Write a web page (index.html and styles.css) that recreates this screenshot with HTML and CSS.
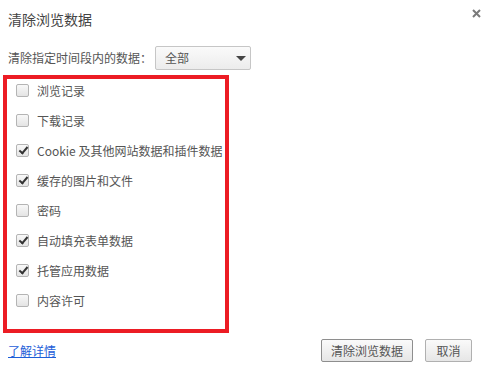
FILE: index.html
```html
<!DOCTYPE html>
<html lang="zh-CN">
<head>
<meta charset="utf-8">
<link rel="stylesheet" href="styles.css">
</head>
<body>
<div class="dialog">
  <div class="header">
    <div class="title">清除浏览数据</div>
    <div class="close"><svg width="9" height="9" viewBox="0 0 9 9"><path d="M1 1L8 8M8 1L1 8" stroke="#7a7a7a" stroke-width="2"/></svg></div>
  </div>
  <div class="range">
    <span class="label">清除指定时间段内的数据：</span>
    <div class="select"><span>全部</span><span class="arrow"></span></div>
  </div>
  <div class="box">
    <label class="item"><span class="cb"></span><span>浏览记录</span></label>
    <label class="item"><span class="cb"></span><span>下载记录</span></label>
    <label class="item"><span class="cb on"></span><span>Cookie 及其他网站数据和插件数据</span></label>
    <label class="item"><span class="cb on"></span><span>缓存的图片和文件</span></label>
    <label class="item"><span class="cb"></span><span>密码</span></label>
    <label class="item"><span class="cb on"></span><span>自动填充表单数据</span></label>
    <label class="item"><span class="cb on"></span><span>托管应用数据</span></label>
    <label class="item"><span class="cb"></span><span>内容许可</span></label>
  </div>
  <div class="footer">
    <a class="link" href="#">了解详情</a>
    <div class="buttons">
      <button class="btn primary">清除浏览数据</button>
      <button class="btn cancel">取消</button>
    </div>
  </div>
</div>
</body>
</html>
```
FILE: styles.css
```css
html, body {
  margin: 0;
  padding: 0;
  background: #fff;
}
body {
  font-family: "Noto Sans CJK SC", "Liberation Sans", sans-serif;
  color: #555;
  font-size: 12px;
}
.dialog {
  width: 488px;
  height: 372px;
  box-sizing: border-box;
  padding: 9px 0 0 0;
}
.header {
  display: flex;
  justify-content: space-between;
  align-items: flex-start;
  padding: 0 7px 0 8px;
}
.title {
  font-size: 14px;
  line-height: 20px;
  color: #444;
}
.close {
  width: 9px;
  height: 9px;
}
.close svg { display: block; }
.range {
  display: flex;
  align-items: center;
  margin-top: 17px;
  padding-left: 8px;
}
.label {
  line-height: 24px;
  width: 147px;
}
.select {
  width: 96px;
  height: 24px;
  box-sizing: border-box;
  border: 1px solid #c6c6c6;
  border-radius: 2px;
  background: linear-gradient(#fafafa, #ececec);
  display: flex;
  align-items: center;
  justify-content: space-between;
  padding: 0 4px 0 9px;
  line-height: 22px;
}
.arrow {
  width: 0;
  height: 0;
  border-left: 5px solid transparent;
  border-right: 5px solid transparent;
  border-top: 5px solid #444;
}
.box {
  margin: 5px 0 0 3px;
  width: 226px;
  box-sizing: border-box;
  border: 4px solid #ec1c24;
  padding: 0 0 16px 9px;
  display: flex;
  flex-direction: column;
  gap: 6px;
}
.item {
  display: flex;
  align-items: center;
  height: 24px;
  gap: 8px;
  margin-top: -1px;
  margin-bottom: 1px;
}
.cb {
  width: 13px;
  height: 13px;
  box-sizing: border-box;
  border: 1px solid #b4b4b4;
  border-radius: 2px;
  background: linear-gradient(#f8f8f8, #e4e4e4);
  position: relative;
  flex: none;
}
.cb.on::after {
  content: "";
  position: absolute;
  left: 4px;
  top: 0px;
  width: 3px;
  height: 7px;
  border-right: 2px solid #333;
  border-bottom: 2px solid #333;
  transform: rotate(40deg);
}
.footer {
  display: flex;
  justify-content: space-between;
  align-items: center;
  padding: 6px 16px 0 8px;
}
.link {
  color: #1d5ed8;
  text-decoration: underline;
  font-size: 12px;
}
.buttons {
  display: flex;
  gap: 12px;
}
.btn {
  font-family: "Noto Sans CJK SC", "Liberation Sans", sans-serif;
  font-size: 12px;
  color: #555;
  height: 23px;
  line-height: 21px;
  padding: 0;
  white-space: nowrap;
  box-sizing: border-box;
  border: 1px solid #b0b0b0;
  border-radius: 2px;
  background: linear-gradient(#fafafa, #e6e6e6);
}
.btn.primary {
  border-color: #8e8e8e;
  width: 92px;
}
.btn.cancel {
  width: 47px;
}
```
